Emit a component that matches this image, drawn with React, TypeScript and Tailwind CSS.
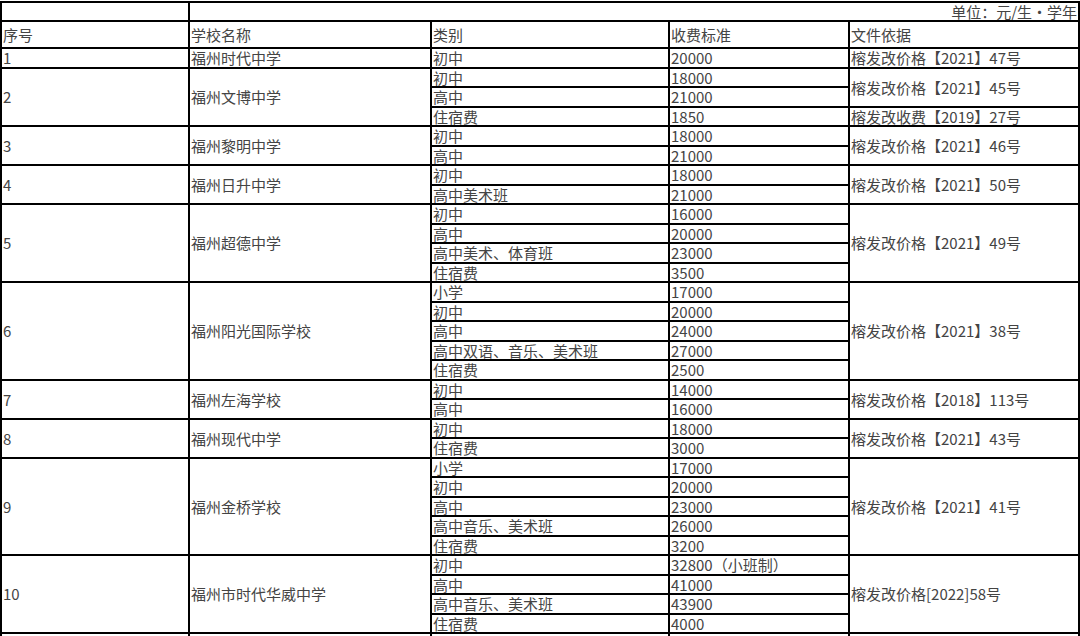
import React from "react";

type School = {
  no: string;
  name: string;
  items: [string, string][];
  docs: [string, number][];
};

const schools: School[] = [
  { no: "1", name: "福州时代中学", items: [["初中", "20000"]], docs: [["榕发改价格【2021】47号", 1]] },
  {
    no: "2",
    name: "福州文博中学",
    items: [["初中", "18000"], ["高中", "21000"], ["住宿费", "1850"]],
    docs: [["榕发改价格【2021】45号", 2], ["榕发改收费【2019】27号", 1]],
  },
  { no: "3", name: "福州黎明中学", items: [["初中", "18000"], ["高中", "21000"]], docs: [["榕发改价格【2021】46号", 2]] },
  { no: "4", name: "福州日升中学", items: [["初中", "18000"], ["高中美术班", "21000"]], docs: [["榕发改价格【2021】50号", 2]] },
  {
    no: "5",
    name: "福州超德中学",
    items: [["初中", "16000"], ["高中", "20000"], ["高中美术、体育班", "23000"], ["住宿费", "3500"]],
    docs: [["榕发改价格【2021】49号", 4]],
  },
  {
    no: "6",
    name: "福州阳光国际学校",
    items: [["小学", "17000"], ["初中", "20000"], ["高中", "24000"], ["高中双语、音乐、美术班", "27000"], ["住宿费", "2500"]],
    docs: [["榕发改价格【2021】38号", 5]],
  },
  { no: "7", name: "福州左海学校", items: [["初中", "14000"], ["高中", "16000"]], docs: [["榕发改价格【2018】113号", 2]] },
  { no: "8", name: "福州现代中学", items: [["初中", "18000"], ["住宿费", "3000"]], docs: [["榕发改价格【2021】43号", 2]] },
  {
    no: "9",
    name: "福州金桥学校",
    items: [["小学", "17000"], ["初中", "20000"], ["高中", "23000"], ["高中音乐、美术班", "26000"], ["住宿费", "3200"]],
    docs: [["榕发改价格【2021】41号", 5]],
  },
  {
    no: "10",
    name: "福州市时代华威中学",
    items: [["初中", "32800（小班制）"], ["高中", "41000"], ["高中音乐、美术班", "43900"], ["住宿费", "4000"]],
    docs: [["榕发改价格[2022]58号", 4]],
  },
  {
    no: "11",
    name: "福州格致鼓山中学",
    items: [["小学", "36000（小班制）"], ["初中", "38000"]],
    docs: [["榕发改价格[2022]60号", 2]],
  },
];

const cell = "border-2 border-black px-[1px] py-0 align-middle whitespace-nowrap overflow-hidden";

export default function App() {
  let k = 0;
  return (
    <div className="bg-white pt-[1px] text-[15px] leading-[16px] text-[#444] [font-family:'Noto_Sans_CJK_SC',sans-serif]">
      <table className="w-[1078px] table-fixed border-collapse border-2 border-black">
        <colgroup>
          <col className="w-[188px]" />
          <col className="w-[242px]" />
          <col className="w-[238px]" />
          <col className="w-[180px]" />
          <col className="w-[230px]" />
        </colgroup>
        <tbody>
          <tr className="h-[19px]">
            <td className={cell}></td>
            <td className={`${cell} text-right`} colSpan={4}>
              单位：元/生・学年
            </td>
          </tr>
          <tr className="h-[27px]">
            <td className={cell}>序号</td>
            <td className={cell}>学校名称</td>
            <td className={cell}>类别</td>
            <td className={cell}>收费标准</td>
            <td className={cell}>文件依据</td>
          </tr>
          {schools.map((s) => {
            const starts: Record<number, [string, number]> = {};
            let at = 0;
            s.docs.forEach((d) => {
              starts[at] = d;
              at += d[1];
            });
            return s.items.map((item, i) => {
              const odd = k++ % 2 === 1;
              return (
                <tr key={s.no + "-" + i} className={odd ? "h-[19px]" : "h-[20px]"}>
                  {i === 0 && (
                    <>
                      <td className={cell} rowSpan={s.items.length}>
                        {s.no}
                      </td>
                      <td className={cell} rowSpan={s.items.length}>
                        {s.name}
                      </td>
                    </>
                  )}
                  <td className={cell}>{item[0]}</td>
                  <td className={cell}>{item[1]}</td>
                  {starts[i] && (
                    <td className={cell} rowSpan={starts[i][1]}>
                      {starts[i][0]}
                    </td>
                  )}
                </tr>
              );
            });
          })}
        </tbody>
      </table>
    </div>
  );
}
